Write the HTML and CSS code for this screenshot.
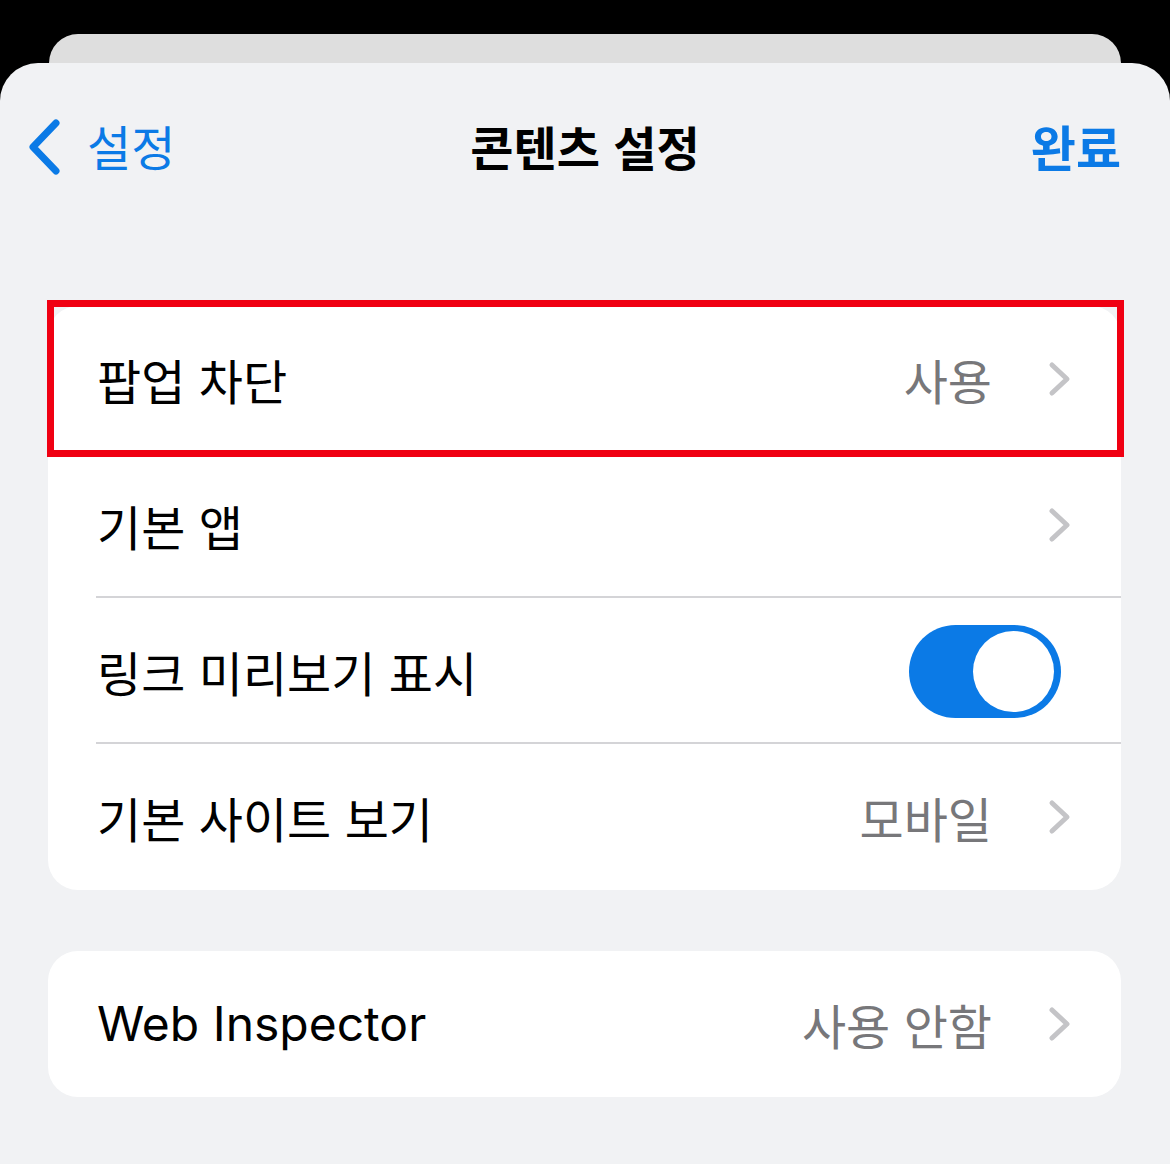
FILE: index.html
```html
<!DOCTYPE html>
<html lang="ko">
<head>
<meta charset="utf-8">
<title>콘텐츠 설정</title>
<link rel="stylesheet" href="styles.css">
</head>
<body>
  <div class="back-card"></div>
  <div class="sheet">
    <header class="nav">
      <div class="nav-left">
        <svg class="back-chevron" viewBox="0 0 32 56" width="32" height="56" aria-hidden="true">
          <path d="M28 4 L5 28 L28 52" fill="none" stroke="#0b7ae6" stroke-width="7" stroke-linecap="round" stroke-linejoin="round"/>
        </svg>
        <span class="back-label">설정</span>
      </div>
      <h1 class="title">콘텐츠 설정</h1>
      <div class="nav-right"><span class="done">완료</span></div>
    </header>

    <section class="group first-group">
      <div class="row highlighted">
        <span class="label">팝업 차단</span>
        <span class="value">사용</span>
        <svg class="chev" viewBox="0 0 24 36" width="24" height="36" aria-hidden="true"><path d="M4 4 L19 18 L4 32" fill="none" stroke="#c4c4c7" stroke-width="5" stroke-linecap="round" stroke-linejoin="round"/></svg>
        <span class="highlight-box"></span>
      </div>
      <div class="row sep">
        <span class="label">기본 앱</span>
        <svg class="chev" viewBox="0 0 24 36" width="24" height="36" aria-hidden="true"><path d="M4 4 L19 18 L4 32" fill="none" stroke="#c4c4c7" stroke-width="5" stroke-linecap="round" stroke-linejoin="round"/></svg>
      </div>
      <div class="row sep">
        <span class="label">링크 미리보기 표시</span>
        <span class="toggle on"><span class="knob"></span></span>
      </div>
      <div class="row">
        <span class="label">기본 사이트 보기</span>
        <span class="value">모바일</span>
        <svg class="chev" viewBox="0 0 24 36" width="24" height="36" aria-hidden="true"><path d="M4 4 L19 18 L4 32" fill="none" stroke="#c4c4c7" stroke-width="5" stroke-linecap="round" stroke-linejoin="round"/></svg>
      </div>
    </section>

    <section class="group second-group">
      <div class="row">
        <span class="label latin">Web Inspector</span>
        <span class="value">사용 안함</span>
        <svg class="chev" viewBox="0 0 24 36" width="24" height="36" aria-hidden="true"><path d="M4 4 L19 18 L4 32" fill="none" stroke="#c4c4c7" stroke-width="5" stroke-linecap="round" stroke-linejoin="round"/></svg>
      </div>
    </section>
  </div>
</body>
</html>
```

FILE: styles.css
```css
* { box-sizing: border-box; }

html, body {
  margin: 0;
  padding: 0;
  background: #000;
  width: 1170px;
  height: 1164px;
  overflow: hidden;
}

body {
  padding-top: 34px;
  font-family: Inter, "Noto Sans CJK KR", sans-serif;
  -webkit-font-smoothing: antialiased;
}

.back-card {
  margin: 0 49px;
  height: 29px;
  background: #dedede;
  border-radius: 32px 32px 0 0;
}

.sheet {
  background: #f1f2f4;
  border-radius: 38px 38px 0 0;
  height: 1101px;
  padding-top: 1px;
}

.nav {
  display: grid;
  grid-template-columns: 1fr auto 1fr;
  align-items: center;
  height: 162px;
  padding: 0 28px;
}

.nav-left {
  display: flex;
  align-items: center;
  gap: 27px;
}

.back-chevron { display: block; margin-top: 4px; }

.back-label {
  font-family: "Noto Sans CJK KR", sans-serif;
  font-size: 48px;
  color: #0b7ae6;
  line-height: 1;
}

.title {
  margin: 0;
  font-family: "Noto Sans CJK KR", sans-serif;
  font-size: 47px;
  font-weight: 700;
  color: #000;
  line-height: 1;
}

.nav-right {
  display: flex;
  justify-content: flex-end;
  padding-right: 21px;
}

.done {
  font-family: "Noto Sans CJK KR", sans-serif;
  font-size: 49px;
  font-weight: 700;
  color: #0b7ae6;
  line-height: 1;
}

.group {
  margin: 0 49px 0 48px;
  background: #fff;
  border-radius: 30px;
}

.first-group { margin-top: 80px; }
.second-group { margin-top: 61px; }

.row {
  position: relative;
  display: flex;
  align-items: center;
  height: 146px;
  padding: 0 49px 0 49px;
}

.row.sep::after {
  content: "";
  position: absolute;
  left: 48px;
  right: 0;
  bottom: 0;
  height: 2px;
  background: #d4d4d7;
}

.label {
  flex: 1;
  font-family: "Noto Sans CJK KR", sans-serif;
  font-size: 48px;
  color: #000;
  line-height: 1;
}

.label.latin {
  font-family: Inter, "Noto Sans CJK KR", sans-serif;
  font-size: 48px;
}

.value {
  font-family: "Noto Sans CJK KR", sans-serif;
  font-size: 48px;
  color: #77777a;
  line-height: 1;
  margin-right: 56px;
}

.chev { display: block; flex: none; }

.highlight-box {
  position: absolute;
  left: -1px;
  right: -3px;
  top: -6px;
  bottom: -5px;
  border: 7px solid #f00012;
  pointer-events: none;
}

.toggle {
  position: relative;
  display: block;
  width: 152px;
  height: 93px;
  border-radius: 47px;
  background: #0b7ae6;
  margin-right: 11px;
}

.knob {
  position: absolute;
  right: 7px;
  top: 6px;
  width: 81px;
  height: 81px;
  border-radius: 50%;
  background: #fff;
}
```
